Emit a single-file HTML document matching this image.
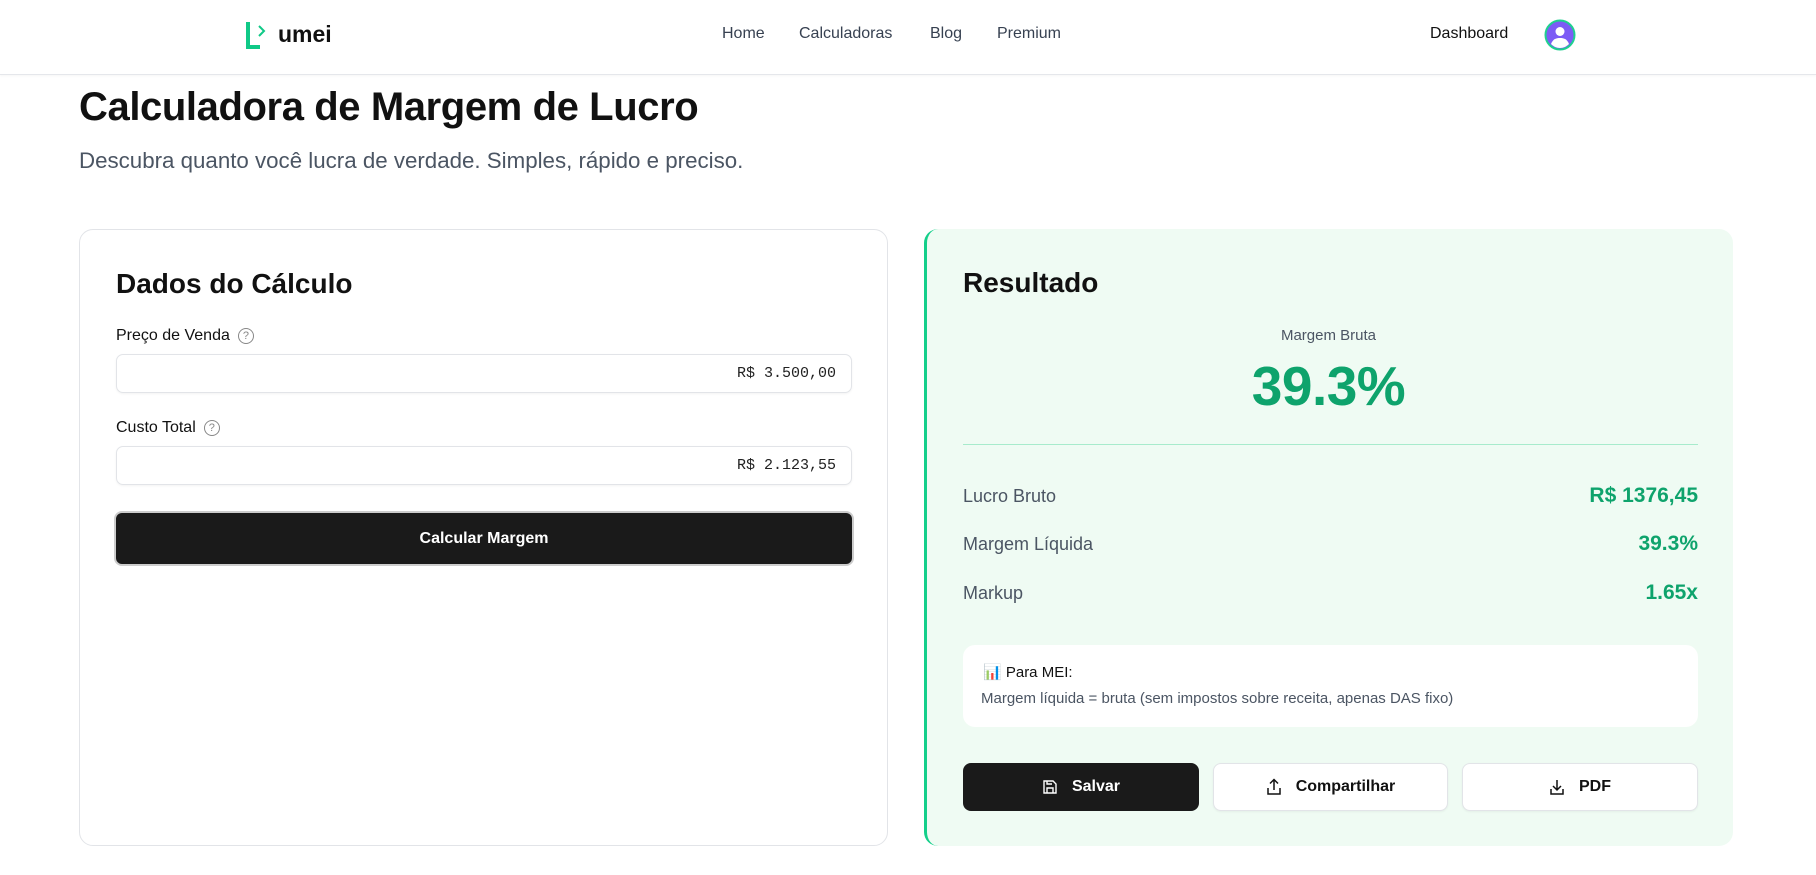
<!DOCTYPE html>
<html><head><meta charset="utf-8"><style>
*{box-sizing:border-box;margin:0;padding:0}
body{width:1816px;height:875px;overflow:hidden;background:#fff;font-family:"Liberation Sans",sans-serif;color:#111;position:relative}
.abs{position:absolute}
header{position:absolute;left:0;top:0;width:1816px;height:75px;border-bottom:1px solid #e5e7eb;box-shadow:0 1px 2px rgba(0,0,0,.04)}
.nav{font-size:16px;color:#374151;top:25px}
.card{position:absolute;top:229px;height:617px;border-radius:14px}
.label{font-size:16px;color:#111;display:flex;align-items:center;gap:8px}
.q{width:16px;height:16px;border:1.3px solid #888;border-radius:50%;font-size:11px;color:#888;display:flex;align-items:center;justify-content:center}
.input{position:absolute;left:116px;width:736px;height:39px;border:1px solid #e2e4e8;border-radius:7px;box-shadow:0 1px 2px rgba(0,0,0,.05);font-family:"Liberation Mono",monospace;font-size:15px;color:#222;text-align:right;padding-right:15px;line-height:37px}
.row{position:absolute;left:963px;width:735px;display:flex;justify-content:space-between;align-items:center}
.row span:first-child{font-size:18px;color:#4b5563}
.row span:last-child{font-size:21px;font-weight:bold;color:#0ea36c}
.btn{position:absolute;top:763px;height:48px;border-radius:8px;display:flex;align-items:center;justify-content:center;gap:14px;font-size:16px;font-weight:bold}
.w{background:#fff;border:1px solid #e2e4e8;color:#111;box-shadow:0 1px 2px rgba(0,0,0,.05)}
</style></head><body>
<header>
<svg class="abs" style="left:244px;top:20px" width="26" height="30" viewBox="0 0 26 30"><path d="M4 2V27H16" fill="none" stroke="#10c987" stroke-width="4"/><path d="M15 6L20 11L15 16" fill="none" stroke="#10c987" stroke-width="2"/></svg>
<div class="abs" style="left:278px;top:21px;font-size:23px;font-weight:bold;color:#111">umei</div>
<div class="abs nav" style="left:722px">Home</div>
<div class="abs nav" style="left:799px">Calculadoras</div>
<div class="abs nav" style="left:930px">Blog</div>
<div class="abs nav" style="left:997px">Premium</div>
<div class="abs" style="left:1430px;top:25px;font-size:16px;color:#111">Dashboard</div>
<svg class="abs" style="left:1544px;top:19px" width="32" height="32" viewBox="0 0 32 32"><circle cx="16" cy="16" r="14.5" fill="#7c5cf5" stroke="#1fd08f" stroke-width="2"/><circle cx="16" cy="12.5" r="4.5" fill="#fff"/><path d="M7 25c2-5 5-6 9-6s7 1 9 6c-2.5 2.5-5.5 4-9 4s-6.5-1.5-9-4z" fill="#fff"/></svg>
</header>
<div class="abs" style="left:79px;top:85px;font-size:40px;font-weight:bold;letter-spacing:-0.4px">Calculadora de Margem de Lucro</div>
<div class="abs" style="left:79px;top:148px;font-size:22.3px;color:#4b5563">Descubra quanto você lucra de verdade. Simples, rápido e preciso.</div>

<div class="card" style="left:79px;width:809px;border:1px solid #e2e4e8"></div>
<div class="abs" style="left:116px;top:268px;font-size:28px;font-weight:bold">Dados do Cálculo</div>
<div class="abs label" style="left:116px;top:327px">Preço de Venda <span class="q">?</span></div>
<div class="input" style="top:354px">R$ 3.500,00</div>
<div class="abs label" style="left:116px;top:419px">Custo Total <span class="q">?</span></div>
<div class="input" style="top:446px">R$ 2.123,55</div>
<div class="abs" style="left:114px;top:511px;width:740px;height:55px;border:2px solid #ccc;border-radius:8px;background:#1a1a1a;color:#fff;font-size:16px;font-weight:bold;display:flex;align-items:center;justify-content:center">Calcular Margem</div>

<div class="card" style="left:924px;width:809px;background:#effbf3;border-left:3px solid #14cf8a"></div>
<div class="abs" style="left:963px;top:267px;font-size:28px;font-weight:bold">Resultado</div>
<div class="abs" style="left:924px;width:809px;top:327px;text-align:center;font-size:15px;color:#4b5563">Margem Bruta</div>
<div class="abs" style="left:924px;width:809px;top:354px;text-align:center;font-size:55px;font-weight:bold;color:#0ea36c;letter-spacing:-0.5px">39.3%</div>
<div class="abs" style="left:963px;top:444px;width:735px;height:1px;background:#a7ebcc"></div>
<div class="row" style="top:484px"><span>Lucro Bruto</span><span>R$ 1376,45</span></div>
<div class="row" style="top:532px"><span>Margem Líquida</span><span>39.3%</span></div>
<div class="row" style="top:581px"><span>Markup</span><span>1.65x</span></div>
<div class="abs" style="left:963px;top:645px;width:735px;height:82px;background:#fff;border-radius:12px"></div>
<div class="abs" style="left:983px;top:663px;font-size:15px;color:#111">📊 Para MEI:</div>
<div class="abs" style="left:981px;top:690px;font-size:15px;color:#4b5563">Margem líquida = bruta (sem impostos sobre receita, apenas DAS fixo)</div>
<div class="btn" style="left:963px;width:236px;background:#1a1a1a;color:#fff"><svg width="16" height="16" viewBox="0 0 16 16" fill="none" stroke="#fff" stroke-width="1.4"><path d="M2 2h9l3 3v9H2z"/><path d="M5 14V9h6v5M5 2v3h5"/></svg>Salvar</div>
<div class="btn w" style="left:1213px;width:235px"><svg width="16" height="18" viewBox="0 0 16 18" fill="none" stroke="#111" stroke-width="1.5"><path d="M8 12V2M4 5.5L8 1.5l4 4M2 10v6h12v-6"/></svg>Compartilhar</div>
<div class="btn w" style="left:1462px;width:236px"><svg width="16" height="16" viewBox="0 0 16 16" fill="none" stroke="#111" stroke-width="1.5"><path d="M8 1v10M4 7l4 4 4-4M2 10v5h12v-5"/></svg>PDF</div>
</body></html>
